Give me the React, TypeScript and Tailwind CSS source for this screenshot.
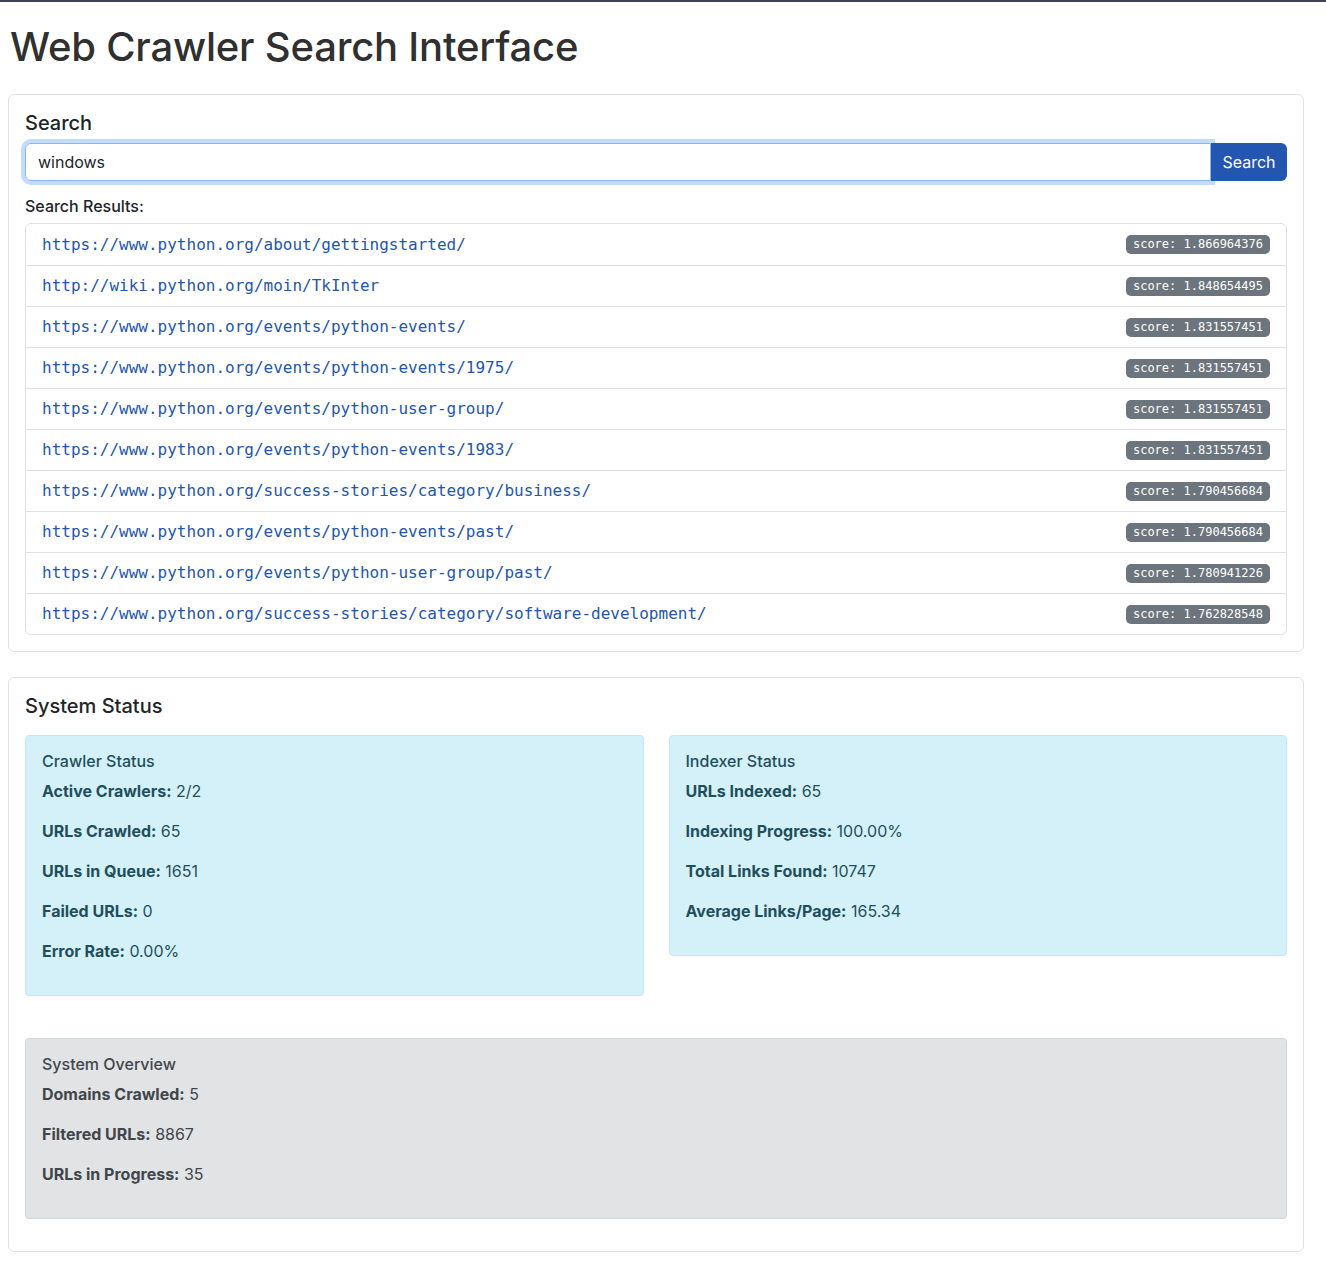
import React from "react";

const results: [string, string][] = [
  ["https://www.python.org/about/gettingstarted/", "1.866964376"],
  ["http://wiki.python.org/moin/TkInter", "1.848654495"],
  ["https://www.python.org/events/python-events/", "1.831557451"],
  ["https://www.python.org/events/python-events/1975/", "1.831557451"],
  ["https://www.python.org/events/python-user-group/", "1.831557451"],
  ["https://www.python.org/events/python-events/1983/", "1.831557451"],
  ["https://www.python.org/success-stories/category/business/", "1.790456684"],
  ["https://www.python.org/events/python-events/past/", "1.790456684"],
  ["https://www.python.org/events/python-user-group/past/", "1.780941226"],
  ["https://www.python.org/success-stories/category/software-development/", "1.762828548"],
];

function Stat({ label, value }: { label: string; value: string }) {
  return (
    <p className="mb-4 leading-6">
      <strong className="font-bold">{label}</strong> {value}
    </p>
  );
}

export default function App() {
  return (
    <div className="min-h-[1262px] bg-white text-[#212529] font-['Inter','Noto_Sans',sans-serif] text-base">
      <div className="h-[2px] bg-[#3d4555]" />
      <div className="pl-[8px] w-[1304px]">
        <h1 className="pl-[2px] mt-[21px] mb-[23px] text-[40px] leading-[48px] font-medium text-[#303030] font-['Inter',sans-serif] tracking-[-0.2px]">
          Web Crawler Search Interface
        </h1>

        <div className="border border-[#dee2e6] rounded-[6px] p-4">
          <h5 className="text-[20px] leading-6 font-medium mb-2">Search</h5>
          <div className="flex">
            <div className="flex-1 rounded-l-[6px] shadow-[0_0_0_4px_rgba(13,110,253,0.25)]">
              <input
                defaultValue="windows"
                className="w-full h-[38px] border border-[#86b7fe] rounded-l-[6px] px-3 text-base outline-none bg-white text-[#212529]"
              />
            </div>
            <button className="h-[38px] w-[76px] bg-[#2356b0] text-white rounded-r-[6px] text-base">
              Search
            </button>
          </div>
          <div className="mt-[16px] mb-[7px] leading-[19px] font-medium">Search Results:</div>
          <div className="border border-[#dee2e6] rounded-[6px]">
            {results.map(([url, score], i) => (
              <div
                key={i}
                className={`flex items-center justify-between h-[41px] px-4 ${i > 0 ? "border-t border-[#dee2e6]" : ""}`}
              >
                <a className="text-[#2356b0] font-['DejaVu_Sans_Mono',monospace] text-[16px]">{url}</a>
                <span className="bg-[#6c757d] text-white font-['DejaVu_Sans_Mono',monospace] text-[12px] font-normal rounded-[5px] px-[7px] h-[19px] leading-[19px]">
                  score: {score}
                </span>
              </div>
            ))}
          </div>
        </div>

        <div className="mt-[25px] border border-[#dee2e6] rounded-[6px] px-4 pt-4 pb-4">
          <h5 className="text-[20px] leading-6 font-medium mb-[17px]">System Status</h5>
          <div className="grid grid-cols-2 gap-x-[25px] items-start">
            <div className="bg-[#d4f1f9] border border-[#bfe9f5] rounded-[4px] px-4 pt-[15px] pb-4 text-[#1f4f5c]">
              <h6 className="text-base leading-5 font-medium mb-2">Crawler Status</h6>
              <Stat label="Active Crawlers:" value="2/2" />
              <Stat label="URLs Crawled:" value="65" />
              <Stat label="URLs in Queue:" value="1651" />
              <Stat label="Failed URLs:" value="0" />
              <Stat label="Error Rate:" value="0.00%" />
            </div>
            <div className="bg-[#d4f1f9] border border-[#bfe9f5] rounded-[4px] px-4 pt-[15px] pb-4 text-[#1f4f5c]">
              <h6 className="text-base leading-5 font-medium mb-2">Indexer Status</h6>
              <Stat label="URLs Indexed:" value="65" />
              <Stat label="Indexing Progress:" value="100.00%" />
              <Stat label="Total Links Found:" value="10747" />
              <Stat label="Average Links/Page:" value="165.34" />
            </div>
          </div>
          <div className="mt-[42px] mb-4 bg-[#e2e3e5] border border-[#d3d6d8] rounded-[4px] px-4 pt-[15px] pb-4 text-[#41464b]">
            <h6 className="text-base leading-5 font-medium mb-2">System Overview</h6>
            <Stat label="Domains Crawled:" value="5" />
            <Stat label="Filtered URLs:" value="8867" />
            <Stat label="URLs in Progress:" value="35" />
          </div>
        </div>
      </div>
    </div>
  );
}
